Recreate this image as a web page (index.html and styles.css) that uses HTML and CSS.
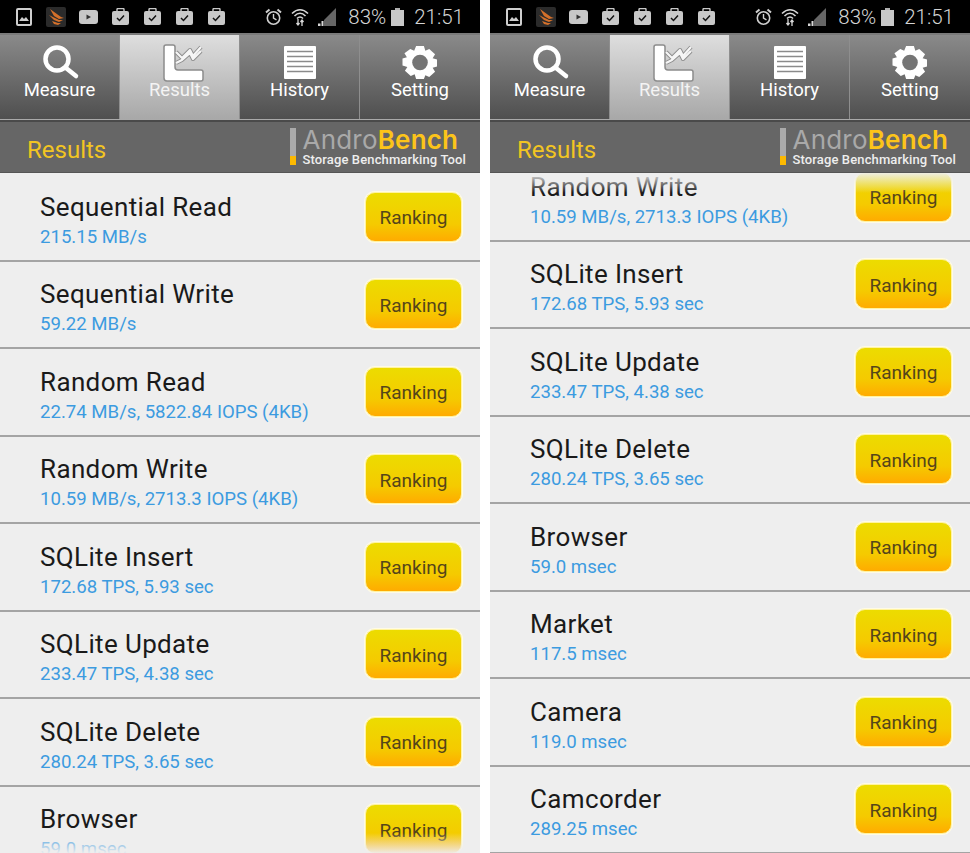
FILE: index.html
```html
<!DOCTYPE html>
<html lang="en">
<head>
  <meta charset="UTF-8">
  <meta name="viewport" content="width=device-width, initial-scale=1.0">
  <title>AndroBench Results</title>
  <link rel="stylesheet" href="styles.css">
</head>
<body>
  <svg class="defs" width="0" height="0">
    <defs>
      <symbol id="i-gallery" viewBox="0 0 16 18">
        <rect x="1" y="1" width="14" height="16" rx="1" fill="none" stroke="#cfcfcf" stroke-width="2"/>
        <path d="M3 13l3-4 2 2 2-2 3 4z" fill="#cfcfcf"/>
      </symbol>
      <symbol id="i-swift" viewBox="0 0 20 20">
        <rect width="20" height="20" rx="2" fill="#2b2b2b"/>
        <path d="M4 2l11 8 3 1-5 1-5-3zM3 8l10 5 4 0-4 2-5-2zM6 14l6 2 3 0-3 2-4-1z" fill="#d4702a"/>
      </symbol>
      <symbol id="i-video" viewBox="0 0 19 14">
        <rect width="19" height="14" rx="3" fill="#c8c8c8"/>
        <path d="M7.5 4.5l4.5 2.5-4.5 2.5z" fill="#333"/>
      </symbol>
      <symbol id="i-task" viewBox="0 0 17 17">
        <path d="M5 3V1.5Q5 .5 6 .5h5q1 0 1 1V3" fill="none" stroke="#c8c8c8" stroke-width="1.4"/>
        <rect y="3" width="17" height="14" rx="2" fill="#c8c8c8"/>
        <path d="M5 10l2.5 2.5L12 7.5" fill="none" stroke="#111" stroke-width="1.5"/>
      </symbol>
      <symbol id="i-alarm" viewBox="0 0 17 18">
        <circle cx="8.5" cy="10" r="6.2" fill="none" stroke="#cfcfcf" stroke-width="1.6"/>
        <path d="M8.5 6v4.2l3 1.6" fill="none" stroke="#cfcfcf" stroke-width="1.4"/>
        <path d="M1 4.5L4.5 1.5M16 4.5L12.5 1.5" stroke="#cfcfcf" stroke-width="2"/>
      </symbol>
      <symbol id="i-wifi" viewBox="0 0 18 20">
        <path d="M1 6.5Q9-1 17 6.5M3.5 9Q9 3.5 14.5 9M6 11.5Q9 8.5 12 11.5" fill="none" stroke="#d8d8d8" stroke-width="1.6"/>
        <path d="M7 12v6M5.5 16l1.5 2 1.5-2M11 19v-6M9.5 15l1.5-2 1.5 2" fill="none" stroke="#d8d8d8" stroke-width="1.3"/>
      </symbol>
      <symbol id="i-signal" viewBox="0 0 18 18">
        <path d="M18 0v18H6V12z" fill="#666"/>
        <path d="M0 18v-2.5h2.5V18zM3.5 18v-5h2v5z" fill="#d8d8d8"/>
      </symbol>
      <symbol id="i-battery" viewBox="0 0 13 18">
        <rect x="4" width="5" height="2" fill="#b0b0b0"/>
        <rect y="2" width="13" height="16" fill="#c8c8c8"/>
      </symbol>
      <symbol id="i-measure" viewBox="0 0 40 35">
        <circle cx="17" cy="14" r="11.5" fill="none" stroke="#fff" stroke-width="4.5"/>
        <path d="M26 23l10 8" stroke="#fff" stroke-width="4.5" stroke-linecap="round"/>
      </symbol>
      <symbol id="i-results" viewBox="0 0 42 38">
        <path d="M2 3q0-2 2-2h7q2 0 2 2v20q0 3 3 3h23q2 0 2 2v7q0 2-2 2H5q-3 0-3-3z" fill="#fff" stroke="#8c8c8c" stroke-width="1.5"/>
        <path d="M14 8l6 6 8-8 3 6 8-9M14 19l6-3 8-7 3 6 8-8" fill="none" stroke="#8c8c8c" stroke-width="4" stroke-linejoin="round"/>
        <path d="M14 8l6 6 8-8 3 6 8-9M14 19l6-3 8-7 3 6 8-8" fill="none" stroke="#f6f6f6" stroke-width="2.2" stroke-linejoin="round"/>
      </symbol>
      <symbol id="i-history" viewBox="-1.5 -1 35 35">
        <rect width="32" height="33" rx="1" fill="#fff"/>
        <path d="M3 5.5h26M3 10.5h26M3 15.5h26M3 20.5h26M3 25.5h26" stroke="#8a8a8a" stroke-width="1.5"/>
      </symbol>
      <symbol id="i-setting" viewBox="0 -1 36 36">
        <path d="M14 0h8l1.500 5 4-2 6 5.500-2.500 4 4.500 1.500v7l-4.500 1.500 2.500 4-6 5.500-4-2L22 34h-8l-1.500-5-4 2-6-5.500 2.500-4L0 20v-7l4.500-1.500-2.500-4L8 3l4 2z" fill="#fff"/>
        <circle cx="18" cy="17" r="8" fill="#757575"/>
      </symbol>
    </defs>
  </svg>

  <div class="phones">
    <section class="phone">
      <div class="status">
        <div class="status-left">
          <svg class="ic-gallery"><use href="#i-gallery"/></svg>
          <svg class="ic-swift"><use href="#i-swift"/></svg>
          <svg class="ic-video"><use href="#i-video"/></svg>
          <svg class="ic-task"><use href="#i-task"/></svg>
          <svg class="ic-task"><use href="#i-task"/></svg>
          <svg class="ic-task"><use href="#i-task"/></svg>
          <svg class="ic-task"><use href="#i-task"/></svg>
        </div>
        <div class="status-right">
          <svg class="ic-alarm"><use href="#i-alarm"/></svg>
          <svg class="ic-wifi"><use href="#i-wifi"/></svg>
          <svg class="ic-signal"><use href="#i-signal"/></svg>
          <span class="pct">83%</span>
          <svg class="ic-battery"><use href="#i-battery"/></svg>
          <span class="clock">21:51</span>
        </div>
      </div>
      <nav class="tabs">
        <div class="tab"><svg class="tab-icon"><use href="#i-measure"/></svg><span>Measure</span></div>
        <div class="tab active"><svg class="tab-icon results-icon"><use href="#i-results"/></svg><span>Results</span></div>
        <div class="tab"><svg class="tab-icon"><use href="#i-history"/></svg><span>History</span></div>
        <div class="tab"><svg class="tab-icon"><use href="#i-setting"/></svg><span>Setting</span></div>
      </nav>
      <header class="banner">
        <h1>Results</h1>
        <div class="logo">
          <div class="logo-bar"></div>
          <div class="logo-text">
            <div class="logo-name">Andro<b>Bench</b></div>
            <div class="logo-tag">Storage Benchmarking Tool</div>
          </div>
        </div>
      </header>
      <div class="list">
        <div class="row"><div class="info"><div class="name">Sequential Read</div><div class="val">215.15 MB/s</div></div><button class="rank">Ranking</button></div>
        <div class="row"><div class="info"><div class="name">Sequential Write</div><div class="val">59.22 MB/s</div></div><button class="rank">Ranking</button></div>
        <div class="row"><div class="info"><div class="name">Random Read</div><div class="val">22.74 MB/s, 5822.84 IOPS (4KB)</div></div><button class="rank">Ranking</button></div>
        <div class="row"><div class="info"><div class="name">Random Write</div><div class="val">10.59 MB/s, 2713.3 IOPS (4KB)</div></div><button class="rank">Ranking</button></div>
        <div class="row"><div class="info"><div class="name">SQLite Insert</div><div class="val">172.68 TPS, 5.93 sec</div></div><button class="rank">Ranking</button></div>
        <div class="row"><div class="info"><div class="name">SQLite Update</div><div class="val">233.47 TPS, 4.38 sec</div></div><button class="rank">Ranking</button></div>
        <div class="row"><div class="info"><div class="name">SQLite Delete</div><div class="val">280.24 TPS, 3.65 sec</div></div><button class="rank">Ranking</button></div>
        <div class="row"><div class="info"><div class="name">Browser</div><div class="val">59.0 msec</div></div><button class="rank">Ranking</button></div>
        <div class="fade-bottom"></div>
      </div>
    </section>

    <section class="phone">
      <div class="status">
        <div class="status-left">
          <svg class="ic-gallery"><use href="#i-gallery"/></svg>
          <svg class="ic-swift"><use href="#i-swift"/></svg>
          <svg class="ic-video"><use href="#i-video"/></svg>
          <svg class="ic-task"><use href="#i-task"/></svg>
          <svg class="ic-task"><use href="#i-task"/></svg>
          <svg class="ic-task"><use href="#i-task"/></svg>
          <svg class="ic-task"><use href="#i-task"/></svg>
        </div>
        <div class="status-right">
          <svg class="ic-alarm"><use href="#i-alarm"/></svg>
          <svg class="ic-wifi"><use href="#i-wifi"/></svg>
          <svg class="ic-signal"><use href="#i-signal"/></svg>
          <span class="pct">83%</span>
          <svg class="ic-battery"><use href="#i-battery"/></svg>
          <span class="clock">21:51</span>
        </div>
      </div>
      <nav class="tabs">
        <div class="tab"><svg class="tab-icon"><use href="#i-measure"/></svg><span>Measure</span></div>
        <div class="tab active"><svg class="tab-icon results-icon"><use href="#i-results"/></svg><span>Results</span></div>
        <div class="tab"><svg class="tab-icon"><use href="#i-history"/></svg><span>History</span></div>
        <div class="tab"><svg class="tab-icon"><use href="#i-setting"/></svg><span>Setting</span></div>
      </nav>
      <header class="banner">
        <h1>Results</h1>
        <div class="logo">
          <div class="logo-bar"></div>
          <div class="logo-text">
            <div class="logo-name">Andro<b>Bench</b></div>
            <div class="logo-tag">Storage Benchmarking Tool</div>
          </div>
        </div>
      </header>
      <div class="list scrolled">
        <div class="row"><div class="info"><div class="name">Random Write</div><div class="val">10.59 MB/s, 2713.3 IOPS (4KB)</div></div><button class="rank">Ranking</button></div>
        <div class="row"><div class="info"><div class="name">SQLite Insert</div><div class="val">172.68 TPS, 5.93 sec</div></div><button class="rank">Ranking</button></div>
        <div class="row"><div class="info"><div class="name">SQLite Update</div><div class="val">233.47 TPS, 4.38 sec</div></div><button class="rank">Ranking</button></div>
        <div class="row"><div class="info"><div class="name">SQLite Delete</div><div class="val">280.24 TPS, 3.65 sec</div></div><button class="rank">Ranking</button></div>
        <div class="row"><div class="info"><div class="name">Browser</div><div class="val">59.0 msec</div></div><button class="rank">Ranking</button></div>
        <div class="row"><div class="info"><div class="name">Market</div><div class="val">117.5 msec</div></div><button class="rank">Ranking</button></div>
        <div class="row"><div class="info"><div class="name">Camera</div><div class="val">119.0 msec</div></div><button class="rank">Ranking</button></div>
        <div class="row"><div class="info"><div class="name">Camcorder</div><div class="val">289.25 msec</div></div><button class="rank">Ranking</button></div>
        <div class="fade-top"></div>
      </div>
    </section>
  </div>
</body>
</html>
```

FILE: styles.css
```css
* {
  box-sizing: border-box;
}
html, body {
  margin: 0;
  height: 853px;
  overflow: hidden;
  background: #fff;
}
body {
  font-family: Roboto, "Liberation Sans", sans-serif;
}
.defs {
  position: absolute;
}
.phones {
  display: flex;
  gap: 10px;
}
.phone {
  width: 480px;
  height: 853px;
  display: flex;
  flex-direction: column;
  background: #eee;
}

/* status bar */
.status {
  height: 33px;
  background: #000;
  display: flex;
  justify-content: space-between;
  align-items: center;
}
.status-left {
  display: flex;
  align-items: center;
  padding-left: 16px;
}
.status-left svg {
  display: block;
}
.ic-gallery {
  width: 16px;
  height: 18px;
}
.ic-swift {
  width: 20px;
  height: 20px;
  margin-left: 14px;
}
.ic-video {
  width: 19px;
  height: 14px;
  margin-left: 13px;
}
.ic-task {
  width: 17px;
  height: 17px;
  margin-left: 15px;
}
.ic-video + .ic-task {
  margin-left: 14px;
}
.status-right {
  display: flex;
  align-items: center;
  padding-right: 16px;
  color: #d4d4d4;
  font-size: 20.5px;
  font-weight: 300;
}
.ic-alarm {
  width: 17px;
  height: 18px;
}
.ic-wifi {
  width: 18px;
  height: 20px;
  margin-left: 9px;
}
.ic-signal {
  width: 18px;
  height: 18px;
  margin-left: 9px;
}
.pct {
  margin-left: 12px;
}
.ic-battery {
  width: 13px;
  height: 18px;
  margin-left: 5px;
}
.clock {
  margin-left: 10px;
}

/* tabs */
.tabs {
  height: 87px;
  display: grid;
  grid-template-columns: repeat(4, 1fr);
  border-top: 2px solid #7a7a7a;
  border-bottom: 1px solid #a9a9a9;
  background: linear-gradient(#8a8a8a, #4f4f4f);
}
.tab {
  display: flex;
  flex-direction: column;
  align-items: center;
  padding-top: 10px;
  color: #fff;
  font-size: 18.5px;
  border-right: 1px solid #8e8e8e;
}
.tab:last-child {
  border-right: 0;
}
.tab span {
  line-height: 22px;
  margin-top: -1px;
}
.tab.active {
  background: linear-gradient(#dedede, #a8a8a8);
  color: #f4f4f4;
}
.tab-icon {
  width: 40px;
  height: 35px;
}
.results-icon {
  width: 42px;
  height: 38px;
  margin: -1px 0 -2px 7px;
}

/* results banner */
.banner {
  height: 53px;
  background: #666;
  border-top: 2px solid #4a4a4a;
  border-bottom: 1px solid #555;
  display: flex;
  justify-content: space-between;
  align-items: center;
  padding: 0 14px 0 27px;
}
.banner h1 {
  margin: 0;
  padding-top: 5px;
  font-size: 24px;
  font-weight: 400;
  color: #f2c522;
}
.logo {
  display: flex;
  align-items: stretch;
  gap: 7px;
}
.logo-bar {
  width: 6px;
  margin: 1px 0 2px;
  background: linear-gradient(#aaa 76%, #fcb900 76%);
}
.logo-name {
  font-family: Inter, sans-serif;
  font-size: 26px;
  line-height: 26px;
  letter-spacing: 0.2px;
  color: #a9a9a9;
}
.logo-name b {
  font-weight: 600;
  color: #fcc419;
}
.logo-tag {
  font-size: 13px;
  line-height: 14px;
  font-weight: 500;
  letter-spacing: 0.12px;
  color: #eee;
}

/* list */
.list {
  flex: 1;
  position: relative;
  overflow: hidden;
  padding-top: 1px;
}
.list.scrolled .row:first-child {
  margin-top: -20px;
}
.row {
  height: 87.5px;
  display: flex;
  justify-content: space-between;
  align-items: center;
  padding: 0 18px 0 40px;
  border-bottom: 2px solid #a4a4a4;
}
.info {
  padding-top: 6px;
}
.name {
  font-size: 26px;
  line-height: 32px;
  letter-spacing: 0.36px;
  color: #1a1a1a;
}
.val {
  font-size: 18.6px;
  line-height: 24px;
  color: #3c9be0;
  margin-top: 2px;
}
.rank {
  width: 97px;
  height: 50px;
  padding: 2px 0 0;
  font: inherit;
  font-size: 19px;
  color: #55451a;
  border: 1px solid #fff3a0;
  border-radius: 10px;
  box-shadow: 0 0 0 1px #fffbe4;
  background: linear-gradient(#ecdc00, #f5ca00 65%, #ffab00);
}
.fade-top, .fade-bottom {
  position: absolute;
  left: 0;
  right: 0;
  height: 20px;
}
.fade-top {
  top: 0;
  background: linear-gradient(rgba(238, 238, 238, 0.95), rgba(238, 238, 238, 0));
}
.fade-bottom {
  bottom: 0;
  background: linear-gradient(rgba(238, 238, 238, 0), rgba(238, 238, 238, 0.95));
}
```
